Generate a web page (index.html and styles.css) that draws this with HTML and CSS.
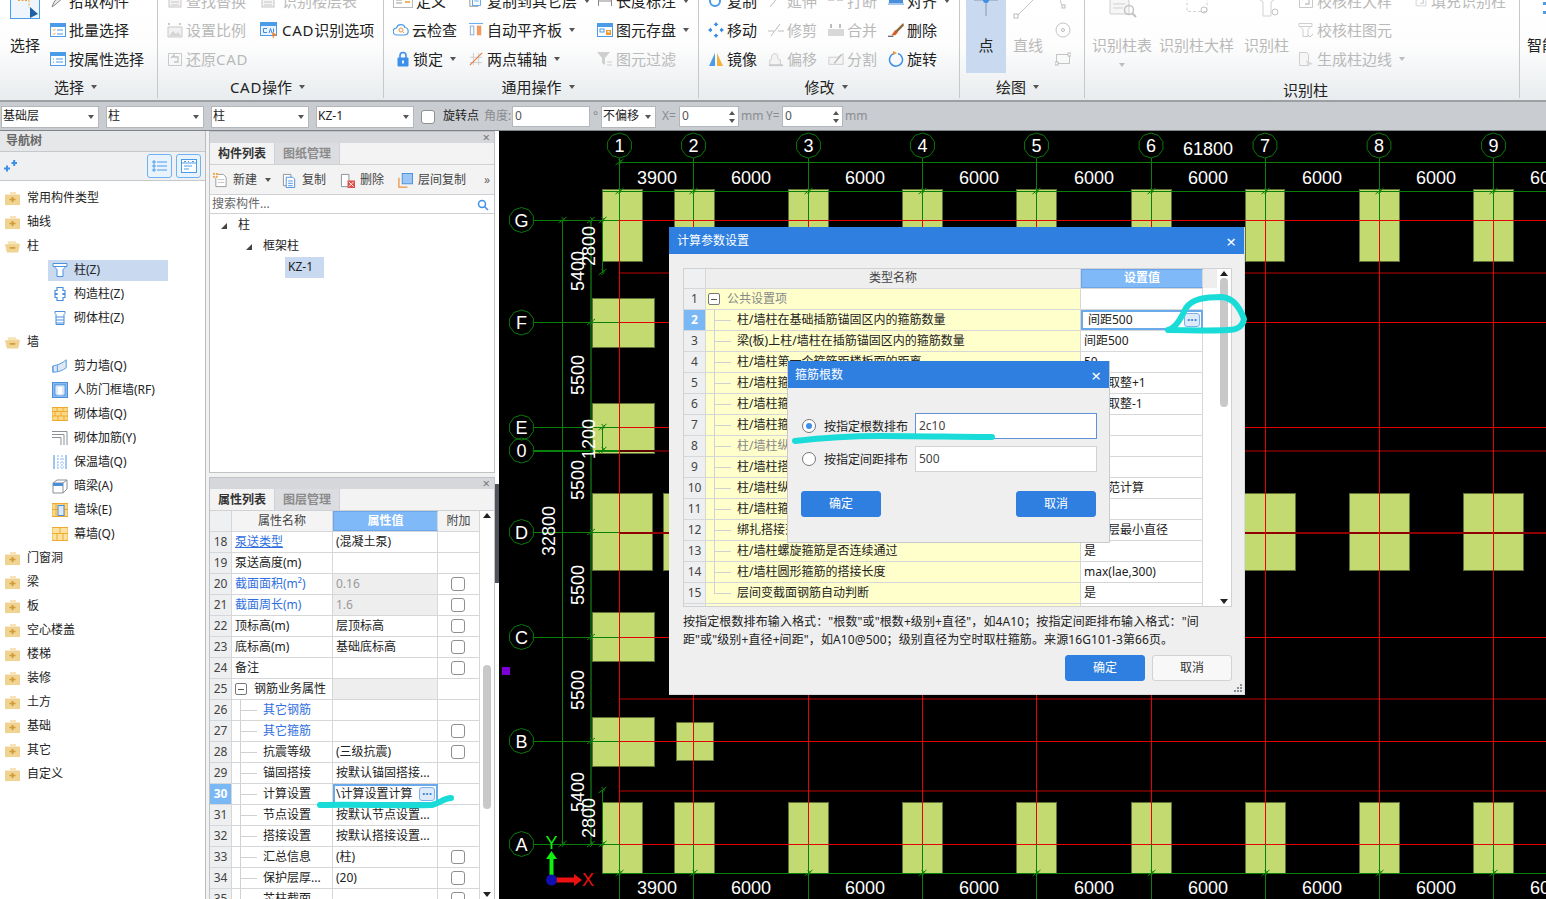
FILE: index.html
```html
<!DOCTYPE html>
<html lang="zh">
<head>
<meta charset="utf-8">
<title>计算参数设置</title>
<link rel="stylesheet" href="styles.css">
</head>
<body>
<svg class="defs" xmlns="http://www.w3.org/2000/svg">
  <symbol id="i-batch" viewBox="0 0 16 16"><rect x=".5" y="1.5" width="15" height="13" fill="#fff" stroke="#4a9be8"/><rect x="1" y="2" width="14" height="3" fill="#4a9be8"/><path d="M3 7.5l1 1 1.500-1.500M3 11.500l1 1 1.500-1.500" stroke="#ef9a2a" fill="none"/><path d="M7 8h6M7 12h6" stroke="#4a9be8"/></symbol>
  <symbol id="i-attr" viewBox="0 0 16 16"><rect x=".5" y="1.500" width="15" height="13" fill="#fff" stroke="#4a9be8"/><rect x="1" y="2" width="14" height="3" fill="#4a9be8"/><path d="M3 8h1M3 11h1M6 8h7M6 11h7" stroke="#4a9be8"/></symbol>
  <symbol id="i-pencil" viewBox="0 0 16 16"><path d="M2 14l2-5 7-8 3 3-8 7z" fill="#e6e6e6" stroke="#8a8a8a"/></symbol>
  <symbol id="i-off-doc" viewBox="0 0 16 16"><rect x="2" y="2" width="12" height="12" fill="#f4f4f4" stroke="#c6c6c6"/><path d="M4 6h8M4 9h8M4 12h8" stroke="#c6c6c6"/></symbol>
  <symbol id="i-scale" viewBox="0 0 16 16"><path d="M1 5h14v10H1z" fill="#f1f1f1" stroke="#c9c9c9"/><path d="M2 14l4-5 3 3 2-2 3 4z" fill="#d5d5d5"/><path d="M2 1v2M1 2h2M13 1v2M12 2h2" stroke="#b9b9b9"/></symbol>
  <symbol id="i-restore" viewBox="0 0 16 16"><path d="M1.500 2.500h13v12h-13z" fill="none" stroke="#c9c9c9"/><path d="M4 7l3-3v2h4v5H7" fill="none" stroke="#c2c2c2" stroke-width="1.300"/></symbol>
  <symbol id="i-cad" viewBox="0 0 18 18"><rect x=".5" y="1.500" width="16" height="13" fill="#eaf3fd" stroke="#4a9be8"/><rect x="1" y="2" width="15" height="3" fill="#4a9be8"/><path d="M7 7.500H3.500v4H7M9 12l1.500-4.500L12 12M13.500 7.500v4" fill="none" stroke="#3a8ae0"/><path d="M12 11l5 3-3 1-1 3z" fill="#ef7d2a"/></symbol>
  <symbol id="i-define" viewBox="0 0 20 16"><rect x=".5" y="1.500" width="19" height="13" fill="#fff" stroke="#b9b9b9"/><rect x="1" y="2" width="18" height="2" fill="#9cc7ef"/><path d="M3 7h6M3 10h6" stroke="#9a9a9a"/><path d="M12 6h5M12 9h5" stroke="#ef9a2a" stroke-width="1.500"/></symbol>
  <symbol id="i-cloud" viewBox="0 0 16 16"><path d="M4 13a3.500 3.500 0 0 1-.5-7 4.500 4.500 0 0 1 8.500-.5 3.800 3.800 0 0 1 0 7.500z" fill="#fff" stroke="#4a9be8" stroke-width="1.200"/><circle cx="8" cy="8" r="2" fill="none" stroke="#ef8f3a"/><path d="M9.500 9.500l1.500 1.500" stroke="#ef8f3a"/></symbol>
  <symbol id="i-lock" viewBox="0 0 12 16"><path d="M3 7V4.500a3 3 0 0 1 6 0V7" fill="none" stroke="#3d90ea" stroke-width="1.600"/><rect x=".5" y="6.500" width="11" height="9" rx="1" fill="#3d90ea"/><path d="M6 9.500v3" stroke="#fff" stroke-width="1.800"/></symbol>
  <symbol id="i-copylayer" viewBox="0 0 16 16"><rect x="1" y="2" width="9" height="12" fill="none" stroke="#8a8a8a"/><rect x="4" y="1" width="9" height="12" fill="#fff" stroke="#4a9be8"/><path d="M6 5h5M6 8h5" stroke="#4a9be8"/></symbol>
  <symbol id="i-align" viewBox="0 0 16 16"><path d="M0 .5h16" stroke="#4a9be8"/><rect x="1.500" y="3.500" width="4" height="10" fill="#fff" stroke="#7aa7d8"/><rect x="9" y="3" width="5" height="11" fill="#f39a63"/></symbol>
  <symbol id="i-2pt" viewBox="0 0 16 16"><path d="M1 12h14M1 6h14M5 1v14M11 1v14" stroke="#c9c9c9"/><path d="M1 15L15 1" stroke="#e8793a" stroke-width="1.200"/></symbol>
  <symbol id="i-len" viewBox="0 0 16 16"><path d="M1.500 3v10M14.500 3v10M1 8h14" stroke="#8a8a8a" fill="none"/></symbol>
  <symbol id="i-save" viewBox="0 0 16 16"><rect x=".5" y="1.500" width="15" height="13" fill="#fff" stroke="#4a9be8"/><rect x="1" y="2" width="14" height="3" fill="#4a9be8"/><rect x="3" y="7" width="4" height="3" fill="none" stroke="#4a9be8"/><rect x="9" y="8" width="5" height="5" fill="#ef9a2a"/><rect x="10.500" y="9" width="2" height="1.500" fill="#fff"/></symbol>
  <symbol id="i-filter" viewBox="0 0 16 16"><path d="M0 1h13L8 7v7l-3-2V7z" fill="#cfcfcf"/><path d="M10 11h5M10 14h5" stroke="#cfcfcf"/></symbol>
  <symbol id="i-copy" viewBox="0 0 16 16"><circle cx="7" cy="8" r="5" fill="none" stroke="#4a9be8" stroke-width="2"/><circle cx="5" cy="4" r="2" fill="#8fbdea"/></symbol>
  <symbol id="i-extend" viewBox="0 0 16 16"><path d="M2 14L10 4M12 1l1 3" stroke="#bcbcbc" fill="none"/></symbol>
  <symbol id="i-break" viewBox="0 0 18 16"><rect x="0" y="2" width="7" height="6" fill="#d2d2d2"/><rect x="10" y="2" width="7" height="6" fill="#d2d2d2"/></symbol>
  <symbol id="i-alignb" viewBox="0 0 16 16"><rect x="1" y="2" width="14" height="8" fill="#4a8fdc"/><path d="M0 11h16" stroke="#4a8fdc"/></symbol>
  <symbol id="i-move" viewBox="0 0 16 16"><g fill="#3d90ea"><path d="M8 0l2.500 3h-5z"/><path d="M8 16l2.500-3h-5z"/><path d="M0 8l3-2.500v5z"/><path d="M16 8l-3-2.500v5z"/></g><circle cx="8" cy="3" r="1.200" fill="#3d90ea"/><circle cx="13" cy="8" r="1.200" fill="#3d90ea"/><circle cx="8" cy="13" r="1.200" fill="#3d90ea"/><circle cx="3" cy="8" r="1.200" fill="#3d90ea"/></symbol>
  <symbol id="i-trim" viewBox="0 0 16 16"><path d="M0 9h6M10 9h6M3 14l9-12" stroke="#bdbdbd" fill="none"/></symbol>
  <symbol id="i-merge" viewBox="0 0 16 16"><rect x="0" y="7" width="16" height="7" fill="#d8d8d8"/><path d="M3 2v4M12 2v4" stroke="#bdbdbd" stroke-width="2"/></symbol>
  <symbol id="i-del" viewBox="0 0 18 16"><path d="M17 0L8 9l2 2 8-8z" fill="#8d6a3d"/><path d="M8 8l3 3-3 3H4z" fill="#d85a26"/><path d="M0 15h6" stroke="#222"/></symbol>
  <symbol id="i-mirror" viewBox="0 0 16 16"><path d="M7 2v13H1z" fill="#4a9be8"/><path d="M9 2v13h6z" fill="#f2b33d"/></symbol>
  <symbol id="i-offset" viewBox="0 0 18 16"><path d="M2 15V9c2 0 2-1 2-3s1-4 4-4 3 2 3 4 1 3 3 3v6z" fill="#f3f3f3" stroke="#c9c9c9"/><path d="M1 15h16" stroke="#c9c9c9" stroke-width="2"/></symbol>
  <symbol id="i-split" viewBox="0 0 18 16"><path d="M1 6h10l6-4v12H1z" fill="#f4f4f4" stroke="#c9c9c9"/><path d="M7 13l8-10" stroke="#b5b5b5" stroke-width="1.500"/></symbol>
  <symbol id="i-rotate" viewBox="0 0 16 16"><path d="M6 2.500a6.500 6.500 0 1 0 4 0" fill="none" stroke="#3d90ea" stroke-width="1.500"/><path d="M5 0l4 2-4 2z" fill="#ef8f3a"/></symbol>
  <symbol id="i-post" viewBox="0 0 16 16"><path d="M1 1.500h14v3H1zM3 4.500h10v1l-2 2v7H5v-7l-2-2z" fill="#fff" stroke="#4a8fdc"/></symbol>
  <symbol id="i-postg" viewBox="0 0 16 16"><path d="M1 1.500h13v3H1zM3 4.500h9v1l-2 2v7H5v-7l-2-2z" fill="none" stroke="#cfcfcf"/><path d="M10 13l2 2 3-3" fill="none" stroke="#c4c4c4"/></symbol>
  <symbol id="i-gen" viewBox="0 0 16 16"><path d="M1.500 1.500h7l2 2v11h-9z" fill="#f6f6f6" stroke="#cfcfcf"/><path d="M8 9l7 4-4 1-1 2z" fill="#d8d8d8"/></symbol>
  <symbol id="i-gz" viewBox="0 0 16 16"><path d="M5 1.500h6v3h2v3h-2v1h2v3h-2v3H5v-3H3v-3h2v-1H3v-3h2z" fill="#fff" stroke="#4a8fdc" stroke-width="1.200"/></symbol>
  <symbol id="i-brick" viewBox="0 0 16 16"><path d="M3 1.500h10v2l-1 1v10H4v-10l-1-1z" fill="#fff" stroke="#4a8fdc"/><path d="M4 7h8M4 10h8M4 13h8" stroke="#4a8fdc"/></symbol>
  <symbol id="i-shear" viewBox="0 0 18 16"><path d="M1 8C6 7 12 5 16 1v9c-4 3-9 5-15 5z" fill="#dce8f6" stroke="#4a8fdc"/><path d="M1 8v7M6 7v7" stroke="#4a8fdc"/></symbol>
  <symbol id="i-door" viewBox="0 0 16 16"><rect x=".5" y=".5" width="15" height="15" fill="#8ab9ee" stroke="#4a8fdc"/><rect x="3" y="3" width="10" height="10" fill="#fff" stroke="#4a8fdc"/><rect x="5" y="4" width="6" height="9" fill="#fff" stroke="#bcd3ee"/></symbol>
  <symbol id="i-bwall" viewBox="0 0 16 13"><rect width="16" height="13" fill="#f8d98a" stroke="#f0a92a"/><path d="M0 4h16M0 8.500h16M5 0v4M11 0v4M3 4v4.500M9 4v4.500M6 8.500V13M12 8.500V13" stroke="#f0a92a"/></symbol>
  <symbol id="i-rein" viewBox="0 0 16 16"><path d="M0 1.500h15V15M0 4.500h12V15M0 7.500h9V15" fill="none" stroke="#8a9097"/></symbol>
  <symbol id="i-ins" viewBox="0 0 16 16"><path d="M2 1v14M14 1v14" stroke="#4a8fdc"/><path d="M6 1v14M10 1v14" stroke="#8ab9ee" stroke-dasharray="2 1"/><path d="M2 5h12M2 9h12M2 13h12" stroke="#8ab9ee" stroke-dasharray="1 2"/></symbol>
  <symbol id="i-beam" viewBox="0 0 16 16"><path d="M1 5l4-3h10v9l-4 4H1zM1 5h10v10M11 5l4-3" fill="#fff" stroke="#8a9097"/><path d="M1 5v3h10V5z" fill="#4a8fdc"/></symbol>
  <symbol id="i-pier" viewBox="0 0 16 13"><rect width="16" height="13" fill="#f8d98a" stroke="#f0a92a"/><path d="M0 6h16M4 0v13M12 0v13" stroke="#f0a92a"/><rect x="6" y="2" width="6" height="10" fill="#dce8f6" stroke="#4a8fdc"/></symbol>
  <symbol id="i-curtain" viewBox="0 0 16 13"><rect width="16" height="13" fill="#fbe2a0" stroke="#f0a92a"/><path d="M8 0v6M0 6h16M5 6v7M11 6v7" stroke="#f0a92a"/></symbol>
  <symbol id="f-c" viewBox="0 0 15 13"><path d="M0 2.500h15V13H0z" fill="#f1d391"/><path d="M5 0h6v2.500H5z" fill="#f6e3b6"/><path d="M4.500 7.500h6M7.500 5v5" stroke="#cf9a38" stroke-width="1.700"/></symbol>
  <symbol id="f-o" viewBox="0 0 16 13"><path d="M3 1h9v2h3v4H3z" fill="#f6e3b6"/><path d="M0 4h16l-2 9H2z" fill="#f1d391"/><path d="M5 8h6" stroke="#cf9a38" stroke-width="1.700"/></symbol>
  <symbol id="t-new" viewBox="0 0 16 16"><path d="M3 1.500h8l3 3v10H3z" fill="#fff" stroke="#9a9a9a"/><path d="M5 7h7M5 10h7" stroke="#c4c4c4"/><rect x="0" y="0" width="5" height="5" fill="#f0a040"/><path d="M0 2.500h5M2.500 0v5" stroke="#fff"/></symbol>
  <symbol id="t-copy" viewBox="0 0 16 16"><path d="M1.500 1.500h8v12h-8z" fill="#fff" stroke="#8a9097"/><path d="M4.500 4.500h7l2 2v9h-9z" fill="#fff" stroke="#4a8fdc"/><path d="M6.500 8.500h5M6.500 11h5M6.500 13.500h5" stroke="#4a8fdc"/></symbol>
  <symbol id="t-del" viewBox="0 0 16 16"><path d="M1.500 1.500h8v13h-8z" fill="#fff" stroke="#8a9097"/><rect x="8" y="8" width="8" height="8" fill="#e0504a"/><path d="M9.500 9.500l5 5M14.500 9.500l-5 5" stroke="#fff"/></symbol>
  <symbol id="t-floor" viewBox="0 0 16 16"><path d="M1 5v10h9" fill="none" stroke="#ef8f3a" stroke-width="1.300"/><rect x="4.500" y=".5" width="11" height="11" fill="#9cc7f5" stroke="#4a8fdc"/></symbol>
</svg>

<div class="app">
  <header class="ribbon">
    <section class="rg g1">
      <div class="rb">
        <div class="big w50">
          <svg class="bigi" viewBox="0 0 30 33"><rect x=".5" y=".5" width="29" height="32" fill="#eef5fd" stroke="#4c9be8"/><path d="M8 14.500h11v7" fill="none" stroke="#f0a030" stroke-dasharray="2 1.500"/><path d="M20 21l8 7-8 4z" fill="#1f5fa5"/></svg>
          <span>选择</span>
        </div>
        <div class="col">
          <div class="ri"><svg class="ic"><use href="#i-pencil"/></svg><span>拾取构件</span></div>
          <div class="ri"><svg class="ic"><use href="#i-batch"/></svg><span>批量选择</span></div>
          <div class="ri"><svg class="ic"><use href="#i-attr"/></svg><span>按属性选择</span></div>
        </div>
      </div>
      <div class="rl l1">选择<i class="caret"></i></div>
    </section>

    <section class="rg g2">
      <div class="rb">
        <div class="col w93">
          <div class="ri off"><svg class="ic"><use href="#i-off-doc"/></svg><span>查找替换</span></div>
          <div class="ri off"><svg class="ic"><use href="#i-scale"/></svg><span>设置比例</span></div>
          <div class="ri off"><svg class="ic"><use href="#i-restore"/></svg><span>还原<b class="lat">CAD</b></span></div>
        </div>
        <div class="col">
          <div class="ri off"><svg class="ic"><use href="#i-off-doc"/></svg><span class="tx2">识别楼层表</span></div>
          <div class="ri"><svg class="ic18"><use href="#i-cad"/></svg><span><b class="lat">CAD</b>识别选项</span></div>
        </div>
      </div>
      <div class="rl l2"><b class="lat">CAD</b>操作<i class="caret"></i></div>
    </section>

    <section class="rg g3">
      <div class="rb">
        <div class="col w76">
          <div class="ri"><svg class="ic20"><use href="#i-define"/></svg><span>定义</span></div>
          <div class="ri"><svg class="ic"><use href="#i-cloud"/></svg><span>云检查</span></div>
          <div class="ri ri-lock"><svg class="ic12"><use href="#i-lock"/></svg><span>锁定</span><i class="caret"></i></div>
        </div>
        <div class="col w128">
          <div class="ri"><svg class="ic14"><use href="#i-copylayer"/></svg><span>复制到其它层</span><i class="caret"></i></div>
          <div class="ri"><svg class="ic14"><use href="#i-align"/></svg><span>自动平齐板</span><i class="caret"></i></div>
          <div class="ri"><svg class="ic14"><use href="#i-2pt"/></svg><span>两点辅轴</span><i class="caret"></i></div>
        </div>
        <div class="col">
          <div class="ri"><svg class="ic"><use href="#i-len"/></svg><span>长度标注</span><i class="caret"></i></div>
          <div class="ri"><svg class="ic"><use href="#i-save"/></svg><span>图元存盘</span><i class="caret"></i></div>
          <div class="ri off"><svg class="ic"><use href="#i-filter"/></svg><span>图元过滤</span></div>
        </div>
      </div>
      <div class="rl l2">通用操作<i class="caret"></i></div>
    </section>

    <section class="rg g4">
      <div class="rb">
        <div class="col w60">
          <div class="ri"><svg class="ic"><use href="#i-copy"/></svg><span>复制</span></div>
          <div class="ri"><svg class="ic"><use href="#i-move"/></svg><span>移动</span></div>
          <div class="ri"><svg class="ic"><use href="#i-mirror"/></svg><span>镜像</span></div>
        </div>
        <div class="col w60">
          <div class="ri off"><svg class="ic"><use href="#i-extend"/></svg><span>延伸</span></div>
          <div class="ri off"><svg class="ic"><use href="#i-trim"/></svg><span>修剪</span></div>
          <div class="ri off"><svg class="ic"><use href="#i-offset"/></svg><span>偏移</span></div>
        </div>
        <div class="col w60">
          <div class="ri off"><svg class="ic"><use href="#i-break"/></svg><span>打断</span></div>
          <div class="ri off"><svg class="ic"><use href="#i-merge"/></svg><span>合并</span></div>
          <div class="ri off"><svg class="ic"><use href="#i-split"/></svg><span>分割</span></div>
        </div>
        <div class="col">
          <div class="ri"><svg class="ic"><use href="#i-alignb"/></svg><span>对齐</span><i class="caret"></i></div>
          <div class="ri"><svg class="ic"><use href="#i-del"/></svg><span>删除</span></div>
          <div class="ri"><svg class="ic"><use href="#i-rotate"/></svg><span>旋转</span></div>
        </div>
      </div>
      <div class="rl l2">修改<i class="caret"></i></div>
    </section>

    <section class="rg g5">
      <div class="rb">
        <div class="big pt">
          <svg class="bigi" viewBox="0 0 30 33"><path d="M3 14h24M15 8v22" stroke="#8b97a5"/><circle cx="15" cy="14" r="3" fill="#3d90ea"/></svg>
          <span>点</span>
        </div>
        <div class="big line off">
          <svg class="bigi" viewBox="0 0 30 33"><path d="M3 31L21 13" stroke="#c4c4c4"/><rect x="1" y="28" width="4" height="4" fill="#fff" stroke="#bbb"/></svg>
          <span>直线</span>
        </div>
        <div class="col minis">
          <div class="ri"><svg class="ic" viewBox="0 0 16 16"><path d="M9 14C5 11 5 7 6 3" fill="none" stroke="#c4c4c4"/><rect x="7" y="12" width="3" height="3" fill="#fff" stroke="#bbb"/></svg></div>
          <div class="ri"><svg class="ic" viewBox="0 0 16 16"><circle cx="8" cy="8" r="7" fill="none" stroke="#c4c4c4"/><circle cx="8" cy="8" r="1.500" fill="none" stroke="#bbb"/></svg></div>
          <div class="ri"><svg class="ic" viewBox="0 0 16 16"><rect x="1.500" y="3.500" width="13" height="9" fill="none" stroke="#c4c4c4"/><rect x="13" y="2" width="3" height="3" fill="#fff" stroke="#bbb"/><rect x="0" y="11" width="3" height="3" fill="#fff" stroke="#bbb"/></svg></div>
        </div>
      </div>
      <div class="rl l2">绘图<i class="caret"></i></div>
    </section>

    <section class="rg g6">
      <div class="rb">
        <div class="big off b1">
          <svg class="bigi" viewBox="0 0 30 33"><path d="M3 12h16l3 3v13H3z" fill="#f6f6f6" stroke="#cfcfcf"/><path d="M6 18h12M6 22h10" stroke="#cfcfcf"/><circle cx="22" cy="24" r="4.500" fill="none" stroke="#c2c2c2" stroke-width="1.500"/><path d="M25 27l4 4" stroke="#c2c2c2" stroke-width="2"/></svg>
          <span>识别柱表</span><i class="caret caret-b"></i>
        </div>
        <div class="big off b2">
          <svg class="bigi" viewBox="0 0 30 33"><path d="M5 11.500h20v14H5z" fill="none" stroke="#d2d2d2" stroke-dasharray="3 2"/><circle cx="22" cy="24" r="3" fill="none" stroke="#c2c2c2"/></svg>
          <span>识别柱大样</span>
        </div>
        <div class="big off b3">
          <svg class="bigi" viewBox="0 0 30 33"><path d="M8 11h14v3l-3 2v14h-8V16l-3-2z" fill="none" stroke="#d2d2d2"/><circle cx="23" cy="26" r="3" fill="none" stroke="#c2c2c2"/></svg>
          <span>识别柱</span>
        </div>
        <div class="col w117">
          <div class="ri off"><svg class="ic"><use href="#i-restore"/></svg><span>校核柱大样</span></div>
          <div class="ri off"><svg class="ic"><use href="#i-postg"/></svg><span>校核柱图元</span></div>
          <div class="ri off"><svg class="ic"><use href="#i-gen"/></svg><span>生成柱边线</span><i class="caret"></i></div>
        </div>
        <div class="col">
          <div class="ri off ri-fill"><svg class="ic12"><use href="#i-restore"/></svg><span>填充识别柱</span></div>
        </div>
      </div>
      <div class="rl rl-low">识别柱</div>
    </section>

    <section class="rg g7">
      <div class="rb">
        <div class="big smart">
          <svg class="bigi" viewBox="0 0 30 33"><rect x="16" y="16" width="3" height="3" fill="#4a9be8"/><rect x="16" y="25" width="3" height="3" fill="#4a9be8"/></svg>
          <span>智能</span>
        </div>
      </div>
    </section>
  </header>

  <div class="toolbar">
    <div class="sel">基础层<i class="caret"></i></div>
    <div class="sel ml7">柱<i class="caret"></i></div>
    <div class="sel ml7">柱<i class="caret"></i></div>
    <div class="sel ml7">KZ-1<i class="caret"></i></div>
    <span class="cb ml7"></span>
    <span class="tlbl ml8">旋转点</span>
    <span class="tlbl dim-l ml5 wa">角度:</span>
    <div class="num wi78">0</div>
    <span class="tlbl dim-l wd">°</span>
    <div class="sel ws">不偏移<i class="caret"></i></div>
    <span class="tlbl dim-l wx">X=</span>
    <div class="num wi60">0<span class="spin"><i></i><i></i></span></div>
    <span class="tlbl dim-l wm">mm</span>
    <span class="tlbl dim-l wy">Y=</span>
    <div class="num wi61">0<span class="spin"><i></i><i></i></span></div>
    <span class="tlbl dim-l wm">mm</span>
  </div>

  <main class="main">
    <nav class="nav">
      <div class="nav-h">导航树</div>
      <div class="nav-t">
        <svg class="spark" viewBox="0 0 13 12"><path d="M0 8.500h6M3 5.500v6M7.500 3h5.500M10.200 0v6" stroke="#3d90ea" stroke-width="2"/></svg>
        <span class="tbtn on"><svg viewBox="0 0 16 16" class="tbi"><path d="M1 3h2v2H1zM1 7h2v2H1zM1 11h2v2H1z" fill="none" stroke="#4a9be8"/><path d="M5 4h10M5 8h10M5 12h10" stroke="#4a9be8"/></svg></span>
        <span class="tbtn on"><svg viewBox="0 0 16 16" class="tbi"><rect x=".5" y="1.500" width="15" height="13" fill="#fff" stroke="#4a9be8"/><path d="M1 5h14" stroke="#4a9be8"/><path d="M3 3.500h2M7 3.500h1M11 3.500h2M3 8h8M3 11h5" stroke="#4a9be8"/></svg></span>
      </div>
      <ul class="tree">
        <li class="n0"><svg class="fo"><use href="#f-c"/></svg>常用构件类型</li>
        <li class="n0"><svg class="fo"><use href="#f-c"/></svg>轴线</li>
        <li class="n0"><svg class="fo"><use href="#f-o"/></svg>柱</li>
        <li class="n1"><div class="n1i sel-row"><svg class="ti"><use href="#i-post"/></svg>柱(Z)</div></li>
        <li class="n1"><div class="n1i"><svg class="ti"><use href="#i-gz"/></svg>构造柱(Z)</div></li>
        <li class="n1"><div class="n1i"><svg class="ti"><use href="#i-brick"/></svg>砌体柱(Z)</div></li>
        <li class="n0"><svg class="fo"><use href="#f-o"/></svg>墙</li>
        <li class="n1"><div class="n1i"><svg class="ti"><use href="#i-shear"/></svg>剪力墙(Q)</div></li>
        <li class="n1"><div class="n1i"><svg class="ti"><use href="#i-door"/></svg>人防门框墙(RF)</div></li>
        <li class="n1"><div class="n1i"><svg class="ti"><use href="#i-bwall"/></svg>砌体墙(Q)</div></li>
        <li class="n1"><div class="n1i"><svg class="ti"><use href="#i-rein"/></svg>砌体加筋(Y)</div></li>
        <li class="n1"><div class="n1i"><svg class="ti"><use href="#i-ins"/></svg>保温墙(Q)</div></li>
        <li class="n1"><div class="n1i"><svg class="ti"><use href="#i-beam"/></svg>暗梁(A)</div></li>
        <li class="n1"><div class="n1i"><svg class="ti"><use href="#i-pier"/></svg>墙垛(E)</div></li>
        <li class="n1"><div class="n1i"><svg class="ti"><use href="#i-curtain"/></svg>幕墙(Q)</div></li>
        <li class="n0"><svg class="fo"><use href="#f-c"/></svg>门窗洞</li>
        <li class="n0"><svg class="fo"><use href="#f-c"/></svg>梁</li>
        <li class="n0"><svg class="fo"><use href="#f-c"/></svg>板</li>
        <li class="n0"><svg class="fo"><use href="#f-c"/></svg>空心楼盖</li>
        <li class="n0"><svg class="fo"><use href="#f-c"/></svg>楼梯</li>
        <li class="n0"><svg class="fo"><use href="#f-c"/></svg>装修</li>
        <li class="n0"><svg class="fo"><use href="#f-c"/></svg>土方</li>
        <li class="n0"><svg class="fo"><use href="#f-c"/></svg>基础</li>
        <li class="n0"><svg class="fo"><use href="#f-c"/></svg>其它</li>
        <li class="n0"><svg class="fo"><use href="#f-c"/></svg>自定义</li>
      </ul>
    </nav>

    <div class="midcol">
      <section class="panel top">
        <div class="strip">×</div>
        <div class="tabs"><span class="tab act">构件列表</span><span class="tab">图纸管理</span></div>
        <div class="ptools">
          <span class="pt-i pt-new"><svg class="pi"><use href="#t-new"/></svg>新建<i class="caret"></i></span>
          <span class="pt-i pt-copy"><svg class="pi"><use href="#t-copy"/></svg>复制</span>
          <span class="pt-i pt-del"><svg class="pi"><use href="#t-del"/></svg>删除</span>
          <span class="pt-i pt-fl"><svg class="pi"><use href="#t-floor"/></svg>层间复制</span>
          <span class="more">»</span>
        </div>
        <div class="search"><span>搜索构件...</span><svg class="mag" viewBox="0 0 12 12"><circle cx="5" cy="5" r="3.500" fill="none" stroke="#3d90ea" stroke-width="1.500"/><path d="M7.500 7.500L11 11" stroke="#3d90ea" stroke-width="1.500"/></svg></div>
        <div class="ctree">
          <div class="c0"><i class="tri"></i>柱</div>
          <div class="c1"><i class="tri"></i>框架柱</div>
          <div class="c2"><span class="kz">KZ-1</span></div>
        </div>
      </section>

      <section class="panel bot">
        <div class="strip">×</div>
        <div class="tabs"><span class="tab act">属性列表</span><span class="tab">图层管理</span></div>
        <div class="ptable">
          <div class="prows">
            <div class="pr ph"><span class="pn"></span><span class="pc">属性名称</span><span class="pv-h">属性值</span><span class="pa">附加</span></div>
            <div class="pr"><span class="pn">18</span><span class="pc link u">泵送类型</span><span class="pv">(混凝土泵)</span><span class="pa"></span></div>
            <div class="pr"><span class="pn">19</span><span class="pc">泵送高度(m)</span><span class="pv"></span><span class="pa"></span></div>
            <div class="pr"><span class="pn">20</span><span class="pc link">截面面积(m²)</span><span class="pv gr">0.16</span><span class="pa"><i class="cb"></i></span></div>
            <div class="pr"><span class="pn">21</span><span class="pc link">截面周长(m)</span><span class="pv gr">1.6</span><span class="pa"><i class="cb"></i></span></div>
            <div class="pr"><span class="pn">22</span><span class="pc">顶标高(m)</span><span class="pv">层顶标高</span><span class="pa"><i class="cb"></i></span></div>
            <div class="pr"><span class="pn">23</span><span class="pc">底标高(m)</span><span class="pv">基础底标高</span><span class="pa"><i class="cb"></i></span></div>
            <div class="pr"><span class="pn">24</span><span class="pc">备注</span><span class="pv"></span><span class="pa"><i class="cb"></i></span></div>
            <div class="pr"><span class="pn">25</span><span class="pc"><i class="minus"></i>钢筋业务属性</span><span class="pv gb"></span><span class="pa"></span></div>
            <div class="pr"><span class="pn">26</span><span class="pc tn link">其它钢筋</span><span class="pv"></span><span class="pa"></span></div>
            <div class="pr"><span class="pn">27</span><span class="pc tn link">其它箍筋</span><span class="pv"></span><span class="pa"><i class="cb"></i></span></div>
            <div class="pr"><span class="pn">28</span><span class="pc tn">抗震等级</span><span class="pv">(三级抗震)</span><span class="pa"><i class="cb"></i></span></div>
            <div class="pr"><span class="pn">29</span><span class="pc tn">锚固搭接</span><span class="pv">按默认锚固搭接...</span><span class="pa"></span></div>
            <div class="pr"><span class="pn act">30</span><span class="pc tn">计算设置</span><span class="pv edit">\计算设置计算<i class="dots">···</i></span><span class="pa"></span></div>
            <div class="pr"><span class="pn">31</span><span class="pc tn">节点设置</span><span class="pv">按默认节点设置...</span><span class="pa"></span></div>
            <div class="pr"><span class="pn">32</span><span class="pc tn">搭接设置</span><span class="pv">按默认搭接设置...</span><span class="pa"></span></div>
            <div class="pr"><span class="pn">33</span><span class="pc tn">汇总信息</span><span class="pv">(柱)</span><span class="pa"><i class="cb"></i></span></div>
            <div class="pr"><span class="pn">34</span><span class="pc tn">保护层厚...</span><span class="pv">(20)</span><span class="pa"><i class="cb"></i></span></div>
            <div class="pr"><span class="pn">35</span><span class="pc tn">芯柱截面</span><span class="pv"></span><span class="pa"><i class="cb"></i></span></div>
          </div>
          <div class="sb psb"><i class="up"></i><i class="thumb"></i><i class="down"></i></div>
        </div>
      </section>
    </div>

    <div class="sash"><i class="handle"></i></div>

    <div class="canvas">
      <svg class="cad" viewBox="499 131 1047 768" xmlns="http://www.w3.org/2000/svg">
        <defs>
          <polygon id="bub" points="0,-12.500 7.350,-10.110 11.890,-3.860 11.890,3.860 7.350,10.110 0,12.500 -7.350,10.110 -11.890,3.860 -11.890,-3.860 -7.350,-10.110"/>
          <path id="tk" d="M-4 3L4-3M-1-3L2 0L-1 3"/>
        </defs>
        <g class="col-r">
          <rect x="602.500" y="189.500" width="40" height="72"/><rect x="674.500" y="189.500" width="40" height="72"/><rect x="788.500" y="189.500" width="40" height="72"/><rect x="902.500" y="189.500" width="40" height="72"/><rect x="1016.500" y="189.500" width="40" height="72"/><rect x="1131.500" y="189.500" width="40" height="72"/><rect x="1245.500" y="189.500" width="39" height="72"/><rect x="1359.500" y="189.500" width="40" height="72"/><rect x="1473.500" y="189.500" width="40" height="72"/>
          <rect x="592.500" y="298.500" width="62" height="49"/><rect x="592.500" y="403.500" width="62" height="50"/>
          <rect x="592.500" y="493.500" width="60" height="77"/><rect x="663.500" y="493.500" width="60" height="77"/><rect x="1235.500" y="493.500" width="60" height="77"/><rect x="1349.500" y="493.500" width="60" height="77"/><rect x="1463.500" y="493.500" width="60" height="77"/>
          <rect x="592.500" y="612.500" width="62" height="49"/><rect x="592.500" y="717.500" width="62" height="49"/><rect x="676.500" y="722.500" width="37" height="38"/>
          <rect x="602.500" y="802.500" width="40" height="71"/><rect x="674.500" y="802.500" width="40" height="71"/><rect x="788.500" y="802.500" width="40" height="71"/><rect x="902.500" y="802.500" width="40" height="71"/><rect x="1016.500" y="802.500" width="40" height="71"/><rect x="1131.500" y="802.500" width="40" height="71"/><rect x="1245.500" y="802.500" width="40" height="71"/><rect x="1359.500" y="802.500" width="40" height="71"/><rect x="1473.500" y="802.500" width="40" height="71"/>
        </g>
        <path class="l-dk" d="M619 272.500H1546M619 450.500H1546M619 698.500H1546M619 790.500H1546"/>
        <path class="l-md" d="M619 532.500H1546"/>
        <path class="l-rd" d="M619 220.500H1546M619 322.500H1546M619 427.500H1546M619 637.500H1546M619 741.500H1546M619 844.500H1546M619.500 220V844M693.500 220V844M808.500 220V844M922.500 220V844M1036.500 220V844M1151.500 220V844M1265.500 220V844M1379.500 220V844M1493.500 220V844"/>
        <path class="l-gr" d="M619 162.500H1546M602 191.500H1546M619.500 158V220M693.500 158V220M808.500 158V220M922.500 158V220M1036.500 158V220M1151.500 158V220M1265.500 158V220M1379.500 158V220M1493.500 158V220M534 220.500H619M534 322.500H619M534 427.500H619M534 532.500H619M534 637.500H619M534 741.500H619M534 844.500H619M562.500 220V844M602.500 220V273M602.500 427V451M602.500 790V845M602 873.500H1546M619.500 844V899M693.500 844V899M808.500 844V899M922.500 844V899M1036.500 844V899M1151.500 844V899M1265.500 844V899M1379.500 844V899M1493.500 844V899"/>
        <path class="l-gw" d="M534 450.500H619"/>
        <path class="l-th" d="M591 220V844"/>
        <g class="l-gr tk">
          <use href="#tk" x="619.500" y="162"/><use href="#tk" x="693.500" y="191"/><use href="#tk" x="619.500" y="191"/><use href="#tk" x="808.500" y="191"/><use href="#tk" x="922.500" y="191"/><use href="#tk" x="1036.500" y="191"/><use href="#tk" x="1151.500" y="191"/><use href="#tk" x="1265.500" y="191"/><use href="#tk" x="1379.500" y="191"/><use href="#tk" x="1493.500" y="191"/>
          <use href="#tk" x="562.500" y="220"/><use href="#tk" x="591" y="220"/><use href="#tk" x="602.500" y="220"/><use href="#tk" x="602.500" y="272"/><use href="#tk" x="591" y="322"/><use href="#tk" x="602.500" y="427"/><use href="#tk" x="602.500" y="450"/><use href="#tk" x="591" y="532"/><use href="#tk" x="591" y="637"/><use href="#tk" x="591" y="741"/><use href="#tk" x="602.500" y="790"/><use href="#tk" x="562.500" y="844"/><use href="#tk" x="591" y="844"/><use href="#tk" x="602.500" y="844"/>
          <use href="#tk" x="619.500" y="873"/><use href="#tk" x="693.500" y="873"/><use href="#tk" x="808.500" y="873"/><use href="#tk" x="922.500" y="873"/><use href="#tk" x="1036.500" y="873"/><use href="#tk" x="1151.500" y="873"/><use href="#tk" x="1265.500" y="873"/><use href="#tk" x="1379.500" y="873"/><use href="#tk" x="1493.500" y="873"/>
        </g>
        <g class="bubs">
          <use href="#bub" x="619.500" y="145.500"/><use href="#bub" x="693.500" y="145.500"/><use href="#bub" x="808.500" y="145.500"/><use href="#bub" x="922.500" y="145.500"/><use href="#bub" x="1036.500" y="145.500"/><use href="#bub" x="1151" y="145.500"/><use href="#bub" x="1265" y="145.500"/><use href="#bub" x="1379" y="145.500"/><use href="#bub" x="1493.500" y="145.500"/>
          <use href="#bub" x="521.500" y="220"/><use href="#bub" x="521.500" y="322.500"/><use href="#bub" x="521.500" y="427.500"/><use href="#bub" x="521.500" y="450.500"/><use href="#bub" x="521.500" y="532"/><use href="#bub" x="521.500" y="637"/><use href="#bub" x="521.500" y="741"/><use href="#bub" x="521.500" y="844"/>
        </g>
        <g class="lbl">
          <text x="619.500" y="152">1</text><text x="693.500" y="152">2</text><text x="808.500" y="152">3</text><text x="922.500" y="152">4</text><text x="1036.500" y="152">5</text><text x="1151" y="152">6</text><text x="1265" y="152">7</text><text x="1379" y="152">8</text><text x="1493.500" y="152">9</text>
          <text x="521.500" y="226.500">G</text><text x="521.500" y="329">F</text><text x="521.500" y="434">E</text><text x="521.500" y="457">0</text><text x="521.500" y="538.500">D</text><text x="521.500" y="643.500">C</text><text x="521.500" y="747.500">B</text><text x="521.500" y="850.500">A</text>
          <text x="1208" y="155">61800</text>
          <text x="657" y="183.500">3900</text><text x="751" y="183.500">6000</text><text x="865" y="183.500">6000</text><text x="979" y="183.500">6000</text><text x="1094" y="183.500">6000</text><text x="1208" y="183.500">6000</text><text x="1322" y="183.500">6000</text><text x="1436" y="183.500">6000</text><text x="1550" y="183.500">6000</text>
          <text x="657" y="893.500">3900</text><text x="751" y="893.500">6000</text><text x="865" y="893.500">6000</text><text x="979" y="893.500">6000</text><text x="1094" y="893.500">6000</text><text x="1208" y="893.500">6000</text><text x="1322" y="893.500">6000</text><text x="1436" y="893.500">6000</text><text x="1550" y="893.500">6000</text>
          <text transform="translate(583.500 271) rotate(-90)">5400</text>
          <text transform="translate(594.500 246) rotate(-90)">2800</text>
          <text transform="translate(583.500 375) rotate(-90)">5500</text>
          <text transform="translate(594.500 439) rotate(-90)">1200</text>
          <text transform="translate(583.500 480) rotate(-90)">5500</text>
          <text transform="translate(554.500 531) rotate(-90)">32800</text>
          <text transform="translate(583.500 585) rotate(-90)">5500</text>
          <text transform="translate(583.500 690) rotate(-90)">5500</text>
          <text transform="translate(583.500 792) rotate(-90)">5400</text>
          <text transform="translate(594.500 818) rotate(-90)">2800</text>
        </g>
        <rect x="502" y="667" width="8" height="8" fill="#7a00d6"/>
        <path d="M549.500 878V859h-3.500l5.500-8 5.500 8h-3.500v19z" fill="#11ee11"/>
        <path d="M556 877.500h18v-3.500l8 6-8 6v-3.500h-18z" fill="#ee1111"/>
        <circle cx="551.500" cy="880" r="5.500" fill="#1010b0"/>
        <text class="ax-y" x="551.500" y="849">Y</text>
        <text class="ax-x" x="588" y="886">X</text>
      </svg>
    </div>
  </main>

  <div class="dlg outer">
    <div class="dh">计算参数设置<span class="x">×</span></div>
    <div class="dgrid">
      <div class="drows">
        <div class="dr dhead"><span class="dn"></span><span class="dt">类型名称</span><span class="dvh">设置值</span></div>
        <div class="dr"><span class="dn">1</span><span class="dt grp"><i class="minus"></i>公共设置项</span><span class="dv"></span></div>
        <div class="dr"><span class="dn act">2</span><span class="dt tn">柱/墙柱在基础插筋锚固区内的箍筋数量</span><span class="dv edit">间距500<i class="dots">···</i></span></div>
        <div class="dr"><span class="dn">3</span><span class="dt tn">梁(板)上柱/墙柱在插筋锚固区内的箍筋数量</span><span class="dv">间距500</span></div>
        <div class="dr"><span class="dn">4</span><span class="dt tn">柱/墙柱第一个箍筋距楼板面的距离</span><span class="dv">50</span></div>
        <div class="dr"><span class="dn">5</span><span class="dt tn">柱/墙柱箍筋加密区内根数计算</span><span class="dv">向上取整+1</span></div>
        <div class="dr"><span class="dn">6</span><span class="dt tn">柱/墙柱箍筋非加密区内根数计算</span><span class="dv">向上取整-1</span></div>
        <div class="dr"><span class="dn">7</span><span class="dt tn">柱/墙柱箍筋弯勾长度</span><span class="dv">11</span></div>
        <div class="dr"><span class="dn">8</span><span class="dt tn mut">柱/墙柱纵筋搭接接头错开</span><span class="dv"></span></div>
        <div class="dr"><span class="dn">9</span><span class="dt tn">柱/墙柱搭接部位箍筋加密</span><span class="dv">是</span></div>
        <div class="dr"><span class="dn">10</span><span class="dt tn">柱/墙柱纵筋错开距离设置</span><span class="dv">按规范计算</span></div>
        <div class="dr"><span class="dn">11</span><span class="dt tn">柱/墙柱箍筋加密范围包含错开距离</span><span class="dv">是</span></div>
        <div class="dr"><span class="dn">12</span><span class="dt tn">绑扎搭接范围内的箍筋间距</span><span class="dv">上下层最小直径</span></div>
        <div class="dr"><span class="dn">13</span><span class="dt tn">柱/墙柱螺旋箍筋是否连续通过</span><span class="dv">是</span></div>
        <div class="dr"><span class="dn">14</span><span class="dt tn">柱/墙柱圆形箍筋的搭接长度</span><span class="dv">max(lae,300)</span></div>
        <div class="dr"><span class="dn">15</span><span class="dt tn end">层间变截面钢筋自动判断</span><span class="dv">是</span></div>
        <div class="dr"><span class="dn"></span><span class="dt"></span><span class="dv"></span></div>
      </div>
      <div class="sb dsb"><i class="up"></i><i class="thumb"></i><i class="down"></i></div>
    </div>
    <p class="desc">按指定根数排布输入格式："根数"或"根数+级别+直径"，如4A10；按指定间距排布输入格式："间<br>距"或"级别+直径+间距"，如A10@500；级别直径为空时取柱箍筋。来源16G101-3第66页。</p>
    <div class="dact"><span class="btn pri">确定</span><span class="btn">取消</span></div>
    <svg class="grip" viewBox="0 0 8 8"><path d="M6 0h2v2H6zM3 3h2v2H3zM6 3h2v2H6zM0 6h2v2H0zM3 6h2v2H3zM6 6h2v2H6z" fill="#8a8f96"/></svg>
  </div>

  <div class="dlg inner">
    <div class="dh">箍筋根数<span class="x">×</span></div>
    <div class="ib">
      <div class="ir"><i class="radio on"></i><span class="il">按指定根数排布</span><span class="iv foc">2c10</span></div>
      <div class="ir"><i class="radio"></i><span class="il">按指定间距排布</span><span class="iv">500</span></div>
      <div class="ia"><span class="btn pri">确定</span><span class="btn pri">取消</span></div>
    </div>
  </div>

  <svg class="ink" viewBox="0 0 1546 899" xmlns="http://www.w3.org/2000/svg">
    <path d="M1168 330C1176 328 1181 318 1186 308C1192 299 1204 297 1222 297C1234 298 1240 308 1244 319C1243 327 1236 330 1228 330C1210 331 1186 330 1168 330"/>
    <path d="M795 441C830 437 850 436 880 436C920 436 960 437 992 437"/>
    <path d="M320 805C360 804 400 806 432 805C440 803 444 798 451 798"/>
  </svg>
</div>
</body>
</html>
```

FILE: styles.css
```css
* { box-sizing: border-box; }
html, body { margin: 0; height: 899px; overflow: hidden; }
body { font: 12px/1.2 "Noto Sans", "Noto Sans CJK SC", sans-serif; color: #222; background: #f2f2f2; }
.defs { width: 0; height: 0; position: absolute; }
i { font-style: normal; }
ul { list-style: none; margin: 0; padding: 0; }
p { margin: 0; }
.lat { font-weight: normal; letter-spacing: .7px; }

.app { position: relative; width: 1546px; height: 899px; overflow: hidden; display: flex; flex-direction: column; }

/* ribbon */
.ribbon { height: 102px; flex: none; display: flex; overflow: hidden; background: linear-gradient(#fff 0, #fdfdfd 45%, #e8ecee 100%); border-bottom: 2px solid #9da0a3; font-size: 15px; line-height: 20px; }
.rg { flex: none; height: 98px; border-right: 1px solid #c6c8ca; padding-left: 9px; }
.g1 { width: 158px; padding-left: 0; }
.g2 { width: 226px; }
.g3 { width: 315px; }
.g4 { width: 261px; }
.g5 { width: 125px; padding-left: 6px; }
.g6 { width: 435px; padding-left: 7px; }
.g7 { width: 26px; border: 0; padding-left: 7px; }
.rb { display: flex; height: 87px; margin-top: -14px; }
.rl { height: 28px; display: flex; align-items: center; justify-content: center; white-space: nowrap; }
.l1 { padding-right: 6px; }
.l2 { padding-right: 15px; }
.rl-low { padding-top: 5px; }
.col { display: flex; flex-direction: column; flex: none; }
.w50 { width: 50px; }
.w60 { width: 60px; }
.w76 { width: 76px; }
.w93 { width: 93px; }
.w117 { width: 117px; }
.w128 { width: 128px; }
.ri { height: 29px; display: flex; align-items: center; white-space: nowrap; }
.off, .off span { color: #b9b9b9; }
.off .caret, .caret-b { border-top-color: #bdbdbd; }
.ic { width: 16px; height: 16px; margin-right: 3px; flex: none; }
.ic18 { width: 18px; height: 18px; margin-right: 4px; flex: none; }
.ic20 { width: 20px; height: 16px; margin-right: 3px; flex: none; }
.ic14 { width: 14px; height: 16px; margin-right: 4px; flex: none; }
.ic12 { width: 12px; height: 16px; margin-right: 4px; flex: none; }
.tx2 { margin-left: 3px; }
.ri-lock { padding-left: 4px; }
.ri-fill { padding-left: 0; }
.caret { display: inline-block; flex: none; width: 0; height: 0; margin-left: 7px; border: 3.5px solid transparent; border-bottom: 0; border-top: 4px solid #555; }

.big { display: flex; flex-direction: column; align-items: center; flex: none; }
.bigi { width: 30px; height: 33px; margin-bottom: 16px; flex: none; }
.big span { line-height: 20px; white-space: nowrap; }
.pt { width: 40px; background: #c9d9f0; }
.line { width: 30px; margin-left: 7px; }
.minis { margin-left: 12px; }
.b1 { width: 60px; }
.b2 { width: 75px; margin-left: 7px; }
.b3 { width: 45px; margin-left: 10px; }
.b3 + .col { margin-left: 9px; }
.caret-b { margin: 8px 0 0; }
.smart { align-items: flex-start; }

/* toolbar */
.toolbar { height: 29px; flex: none; display: flex; align-items: center; padding: 1px 0 0 1px; background: #c9ccd1; border-bottom: 1px solid #808387; white-space: nowrap; }
.sel { width: 98px; height: 22px; flex: none; display: flex; align-items: center; justify-content: space-between; padding: 0 4px 0 1px; background: #fff; border: 1px solid #b4b7ba; }
.sel .caret { margin: 0; }
.ml5 { margin-left: 5px; }
.ml7 { margin-left: 7px; }
.ml8 { margin-left: 8px; }
.cb { display: block; width: 14px; height: 14px; flex: none; background: #fff; border: 1px solid #8f8f8f; border-radius: 3px; }
.tlbl { flex: none; }
.dim-l { color: #8a8d91; }
.wa { width: 28px; }
.num { height: 21px; flex: none; display: flex; align-items: center; justify-content: space-between; padding: 0 3px 0 2px; background: #fff; border: 1px solid #b4b7ba; color: #555; }
.wi78 { width: 78px; }
.wi60 { width: 60px; }
.wi61 { width: 61px; }
.wd { width: 11px; padding-left: 3px; }
.ws { width: 55px; }
.wx { width: 17px; margin-left: 6px; }
.wy { width: 16px; }
.wm { width: 27px; padding-left: 2px; }
.spin { display: flex; flex-direction: column; gap: 4px; }
.spin i { width: 0; height: 0; border: 3px solid transparent; border-top: 0; border-bottom: 4px solid #555; }
.spin i + i { transform: scaleY(-1); }

/* main */
.main { flex: 1; min-height: 0; display: flex; background: #f2f2f2; }
.nav { width: 206px; flex: none; background: #fff; border-right: 1px solid #b9bbbe; display: flex; flex-direction: column; }
.nav-h { height: 21px; display: flex; align-items: center; padding-left: 6px; background: #e6e7e9; color: #666; font-weight: bold; border-bottom: 1px solid #c6c8ca; }
.nav-t { height: 29px; flex: none; display: flex; align-items: center; padding: 0 4px; background: #eff0f1; border-bottom: 1px solid #c6c8ca; }
.spark { width: 13px; height: 12px; margin-right: auto; }
.tbtn { width: 25px; height: 24px; display: flex; align-items: center; justify-content: center; background: #e9f3fd; border: 1px solid #6fb1f5; border-radius: 3px; margin-left: 4px; }
.tbi { width: 16px; height: 16px; }
.tree { padding-top: 5px; }
.tree li { height: 24px; display: flex; align-items: center; }
.n0 { padding-left: 5px; }
.fo { width: 15px; height: 13px; margin-right: 7px; flex: none; }
.n1 { padding-left: 48px; }
.n1i { width: 120px; height: 21px; display: flex; align-items: center; padding-left: 4px; white-space: nowrap; }
.ti { width: 16px; height: 16px; margin-right: 6px; flex: none; }
.sel-row { background: #c9d9f0; }

.midcol { width: 286px; flex: none; margin-left: 3px; display: flex; flex-direction: column; gap: 4px; }
.panel { background: #fff; border: 1px solid #c0c2c5; border-bottom: 0; display: flex; flex-direction: column; overflow: hidden; }
.top { height: 342px; flex: none; border-bottom: 1px solid #c0c2c5; }
.bot { flex: 1; min-height: 0; }
.strip { height: 11px; flex: none; background: #d5d7db; color: #777; display: flex; align-items: center; justify-content: flex-end; padding-right: 4px; font-size: 13px; line-height: 11px; }
.tabs { height: 22px; flex: none; display: flex; background: #f3f3f4; border-bottom: 1px solid #cfd1d3; }
.tab { width: 65px; display: flex; align-items: center; justify-content: center; padding-top: 1px; font-weight: bold; color: #8b8b8b; background: #dcdde0; border-right: 1px solid #cfd1d3; }
.tab.act { color: #333; background: #f3f3f4; }
.ptools { height: 30px; flex: none; display: flex; align-items: center; padding-top: 1px; background: #f3f3f4; border-bottom: 1px solid #cfd1d3; color: #444; }
.pt-i { display: flex; align-items: center; }
.pi { width: 15px; height: 15px; margin-right: 5px; flex: none; }
.pt-new { margin-left: 3px; }
.pt-new .caret { margin-left: 8px; }
.pt-copy { margin-left: 11px; }
.pt-del { margin-left: 14px; }
.pt-fl { margin-left: 14px; }
.more { margin-left: auto; margin-right: 4px; color: #666; }
.search { height: 19px; flex: none; display: flex; align-items: center; justify-content: space-between; padding: 1px 5px 0 2px; color: #666; border-bottom: 1px solid #cfd1d3; }
.mag { width: 12px; height: 12px; }
.ctree { flex: 1; padding-top: 1px; }
.c0, .c1, .c2 { display: flex; align-items: center; height: 21px; }
.c0 { padding-left: 11px; }
.c1 { padding-left: 36px; }
.c2 { padding-left: 75px; }
.tri { width: 0; height: 0; margin-right: 11px; border-style: solid; border-width: 0 0 6px 6px; border-color: transparent transparent #444 transparent; }
.kz { width: 39px; height: 21px; display: flex; align-items: center; padding-left: 3px; background: #c9d9f0; }

.ptable { flex: 1; min-height: 0; display: flex; overflow: hidden; }
.prows { width: 270px; flex: none; }
.pr { display: grid; grid-template-columns: 22px 101px 105px 42px; height: 21px; border-bottom: 1px solid #d5d7d9; }
.pr > span { display: flex; align-items: center; border-right: 1px solid #d5d7d9; white-space: nowrap; overflow: hidden; }
.pn { justify-content: center; background: #eeeff0; color: #444; }
.pn.act, .dn.act { background: #7ab8f5; color: #fff; font-weight: bold; }
.pc { padding-left: 3px; }
.tn { background: linear-gradient(#cfd1d3, #cfd1d3) 8px 0 / 1px 100% no-repeat, linear-gradient(#cfd1d3, #cfd1d3) 9px 10px / 16px 1px no-repeat; }
.pc.tn { padding-left: 31px; }
.link { color: #2f6fe0; }
.u { text-decoration: underline; }
.pv { padding-left: 3px; }
.pv-h, .dvh { justify-content: center; background: #7fb9f7; color: #fff; font-weight: bold; border: 1px solid #6ba7e8; }
.pa { justify-content: center; padding-right: 2px; }
.gr { background: #eeeeee; color: #999; }
.gb { background: #eeeeee; }
.ph .pc, .ph .pa { justify-content: center; background: #f4f4f5; padding: 0; color: #444; }
.ph .pn { background: #eef0f2; }
.edit { display: flex; justify-content: space-between; border: 2px solid #6aa9ea !important; background: #fff; }
.pv.edit { padding: 0 1px 0 1px; }
.dots { width: 16px; height: 14px; display: flex; align-items: center; justify-content: center; background: #dceafa; border: 1px solid #7fb0ea; border-radius: 3px; color: #3d7fd0; font-weight: bold; line-height: 8px; }
.minus { width: 12px; height: 12px; flex: none; margin-right: 7px; display: flex; align-items: center; justify-content: center; border: 1px solid #777; border-radius: 2px; background: #fff; }
.minus::before { content: ""; width: 6px; height: 1px; background: #555; }
.pa .cb { width: 14px; height: 14px; }

.sb { display: flex; flex-direction: column; align-items: center; }
.psb { width: 14px; height: 100%; background: #fff; }
.up, .down { width: 0; height: 0; flex: none; border: 4px solid transparent; }
.up { border-top: 0; border-bottom: 5px solid #222; }
.down { border-bottom: 0; border-top: 5px solid #222; margin-top: auto; }
.thumb { flex: none; background: #c8c8c8; border-radius: 4px; }
.psb .up { margin-top: 2px; }
.psb .thumb { width: 8px; height: 144px; margin-top: 147px; }
.psb .down { margin-bottom: 2px; }

.sash { width: 4px; flex: none; background: #fff; padding-top: 353px; }
.handle { display: block; height: 99px; background: #50545a; }
.canvas { flex: 1; min-width: 0; background: #000; }
.cad { display: block; width: 1047px; height: 768px; }
.col-r rect { fill: #c3da70; stroke: #5f7036; stroke-width: 1; shape-rendering: crispEdges; }
.l-dk { stroke: #5c0000; fill: none; stroke-width: 2; shape-rendering: crispEdges; }
.l-md { stroke: #900000; fill: none; stroke-width: 2; shape-rendering: crispEdges; }
.l-rd { stroke: #e60000; fill: none; stroke-width: 1; shape-rendering: crispEdges; }
.l-gr { stroke: #0a800a; fill: none; stroke-width: 1; shape-rendering: crispEdges; }
.l-gw { stroke: #0a800a; fill: none; stroke-width: 2; shape-rendering: crispEdges; }
.l-th { stroke: #0d4d0d; fill: none; stroke-width: 2; shape-rendering: crispEdges; }
.tk { shape-rendering: auto; }
.bubs { fill: none; stroke: #0c780c; stroke-width: 1; }
.lbl text { fill: #fff; font: 18px "Liberation Sans", sans-serif; text-anchor: middle; }
.ax-y { fill: #11ee11; font: 18px "Liberation Sans", sans-serif; text-anchor: middle; }
.ax-x { fill: #ee1111; font: 18px "Liberation Sans", sans-serif; text-anchor: middle; }

/* dialogs */
.dlg { position: absolute; display: flex; flex-direction: column; background: #efefef; }
.outer { left: 669px; top: 227px; width: 576px; height: 468px; border-right: 1px solid #d8dadc; border-bottom: 1px solid #d8dadc; }
.inner { left: 787px; top: 361px; width: 323px; height: 182px; border: 1px solid #c8cacc; border-top: 0; }
.dh { height: 27px; flex: none; display: flex; align-items: center; justify-content: space-between; padding: 1px 8px 0 8px; background: #2e7fe0; color: #fff; }
.inner .dh { padding-left: 7px; }
.x { font-size: 17px; line-height: 17px; }
.dgrid { height: 339px; flex: none; margin: 14px 0 0 14px; width: 549px; display: flex; border: 1px solid #cfd1d3; background: #fff; overflow: hidden; }
.drows { width: 519px; flex: none; }
.dr { display: grid; grid-template-columns: 22px 375px 122px; height: 21px; border-bottom: 1px solid #d5d7d9; }
.dr > span { display: flex; align-items: center; border-right: 1px solid #d5d7d9; white-space: nowrap; overflow: hidden; }
.dn { justify-content: center; background: #eeeff0; color: #444; }
.dt { background-color: #ffffcc; padding-left: 2px; }
.dt.tn { background-position: 8px 0, 9px 10px; padding-left: 31px; }
.dt.end { background-size: 1px 11px, 16px 1px; }
.mut, .grp { color: #888; }
.dv { padding-left: 3px; }
.dv.edit { padding: 0 1px 0 5px; }
.dhead { height: 20px; }
.dhead .dn { background: #eef0f2; }
.dhead .dt { background: #eeeeee; justify-content: center; padding: 0; color: #444; }
.dsb { flex: 1; align-items: flex-end; padding-right: 3px; background: linear-gradient(#eeeeee, #eeeeee) 0 0 / 14px 19px no-repeat, #fff; }
.dsb .up { margin-top: 2px; }
.dsb .thumb { width: 8px; height: 129px; margin-top: 2px; }
.dsb .down { margin-bottom: 2px; }
.desc { margin: 6px 0 0 14px; line-height: 18px; letter-spacing: .11px; }
.dact { display: flex; justify-content: flex-end; gap: 7px; margin: 6px 12px 0 0; }
.btn { width: 80px; height: 26px; display: flex; align-items: center; justify-content: center; border-radius: 3px; background: #f8f8f8; border: 1px solid #d0d2d4; color: #333; }
.btn.pri { background: #2e7fe0; border-color: #2e7fe0; color: #fff; }
.grip { position: absolute; right: 2px; bottom: 2px; width: 8px; height: 8px; }

.ib { padding: 25px 14px 0; display: flex; flex-direction: column; gap: 7px; }
.ir { display: flex; align-items: center; height: 26px; }
.radio { width: 14px; height: 14px; flex: none; margin-right: 8px; display: flex; align-items: center; justify-content: center; background: #fff; border: 1px solid #777; border-radius: 50%; }
.radio.on::before { content: ""; width: 6px; height: 6px; border-radius: 50%; background: #3d90ea; }
.il { width: 91px; flex: none; padding-top: 2px; }
.iv { width: 182px; height: 26px; flex: none; display: flex; align-items: center; padding-left: 3px; background: #fff; border: 1px solid #d0d2d4; color: #444; }
.iv.foc { border-color: #5f90d8; }
.ia { display: flex; justify-content: space-between; margin: 12px -1px 0 -1px; }

.ink { position: absolute; left: 0; top: 0; width: 1546px; height: 899px; pointer-events: none; }
.ink path { fill: none; stroke: #19dcd8; stroke-width: 6; stroke-linecap: round; stroke-linejoin: round; }
```
